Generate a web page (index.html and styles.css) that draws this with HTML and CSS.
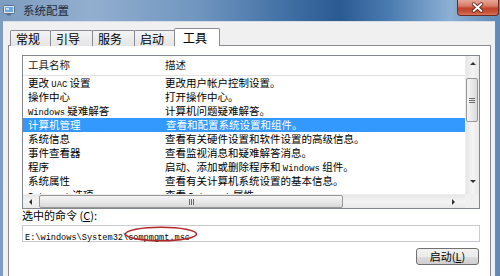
FILE: index.html
```html
<!DOCTYPE html>
<html lang="zh-CN">
<head>
<meta charset="utf-8">
<title>系统配置</title>
<link rel="stylesheet" href="styles.css">
</head>
<body>
<div class="window">
  <div class="titlebar">
    <svg class="appicon" viewBox="0 0 12 12" width="12" height="12">
      <rect x="0.5" y="1.5" width="11" height="8" rx="1" fill="#dfe6ee" stroke="#5c6f86"/>
      <rect x="2" y="3" width="8" height="5" fill="#6aa7e0"/>
      <rect x="3" y="4" width="3" height="2" fill="#bfe0fb"/>
      <rect x="4" y="10" width="4" height="1.5" fill="#5c6f86"/>
    </svg>
    <span class="title">系统配置</span>
    <div class="close">
      <svg viewBox="0 0 42 16" width="42" height="16">
        <path d="M17 4 L25 11 M25 4 L17 11" stroke="#5a1d14" stroke-width="3.6" stroke-linecap="round"/>
        <path d="M17 4 L25 11 M25 4 L17 11" stroke="#ffffff" stroke-width="2" stroke-linecap="round"/>
      </svg>
    </div>
  </div>
  <div class="client">
    <div class="tabs">
      <div class="tab w1">常规</div>
      <div class="tab w2">引导</div>
      <div class="tab w2">服务</div>
      <div class="tab w3">启动</div>
      <div class="tab active">工具</div>
    </div>
    <div class="panel">
      <div class="listview">
        <div class="lv-main">
          <div class="lv-head"><span class="c1">工具名称</span><span class="c2">描述</span></div>
          <div class="lv-row"><span class="c1">更改 <span class="mono">UAC</span> 设置</span><span class="c2">更改用户帐户控制设置。</span></div>
          <div class="lv-row"><span class="c1">操作中心</span><span class="c2">打开操作中心。</span></div>
          <div class="lv-row"><span class="c1"><span class="mono">Windows</span> 疑难解答</span><span class="c2">计算机问题疑难解答。</span></div>
          <div class="lv-row selected"><span class="c1">计算机管理</span><span class="c2">查看和配置系统设置和组件。</span></div>
          <div class="lv-row"><span class="c1">系统信息</span><span class="c2">查看有关硬件设置和软件设置的高级信息。</span></div>
          <div class="lv-row"><span class="c1">事件查看器</span><span class="c2">查看监视消息和疑难解答消息。</span></div>
          <div class="lv-row"><span class="c1">程序</span><span class="c2">启动、添加或删除程序和 <span class="mono">Windows</span> 组件。</span></div>
          <div class="lv-row"><span class="c1">系统属性</span><span class="c2">查看有关计算机系统设置的基本信息。</span></div>
          <div class="lv-row"><span class="c1"><span class="mono">Internet</span> 选项</span><span class="c2">查看 <span class="mono">Internet</span> 属性。</span></div>
        </div>
        <div class="vscroll">
          <div class="sbtn up"><span class="tri-up"></span></div>
          <div class="vtrack">
            <div class="vthumb"><span class="grip-h"></span><span class="grip-h"></span><span class="grip-h"></span></div>
          </div>
          <div class="sbtn down"><span class="tri-down"></span></div>
        </div>
        <div class="hscroll">
          <div class="sbtn left"><span class="tri-left"></span></div>
          <div class="hthumb"><span class="grip-v"></span><span class="grip-v"></span><span class="grip-v"></span></div>
          <div class="htrack"></div>
          <div class="sbtn right"><span class="tri-right"></span></div>
        </div>
        <div class="corner"></div>
      </div>
      <div class="label">选中的命令 (<u>C</u>):</div>
      <div class="cmdbox">
        <span class="mono path">E:\windows\System32\compmgmt.msc</span>
        <svg class="ring" viewBox="0 0 74 16" width="74" height="16">
          <ellipse cx="37" cy="8" rx="35.5" ry="6.8" fill="none" stroke="#b3262a" stroke-width="1.5"/>
        </svg>
      </div>
      <div class="btnrow"><div class="btn">启动(<u>L</u>)</div></div>
    </div>
  </div>
</div>
</body>
</html>
```
FILE: styles.css
```css
* { box-sizing: border-box; }
html, body { margin: 0; padding: 0; }
body {
  width: 500px;
  height: 276px;
  overflow: hidden;
  font-family: "Noto Sans CJK SC", "Noto Sans", sans-serif;
  background: linear-gradient(90deg, #7d9cc0 0%, #93afcf 18%, #6f95bf 40%, #3a6aa0 60%, #2a5a92 68%, #4b7cb1 78%, #8db0d4 90%, #5f89b6 100%);
}
.window {
  height: 276px;
  display: flex;
  flex-direction: column;
}
.titlebar {
  height: 21px;
  flex: none;
  display: flex;
  align-items: flex-start;
  padding-left: 3px;
}
.appicon { margin-top: 4px; flex: none; }
.title {
  margin-left: 8px;
  font-size: 11.5px;
  line-height: 20px;
  color: #1f2b38;
}
.close {
  margin-left: auto;
  margin-right: 1px;
  width: 42px;
  height: 16px;
  border: 1px solid #6d2a20;
  border-top: none;
  border-radius: 0 0 4px 4px;
  background: linear-gradient(#e7a797 0%, #d77b66 40%, #c0432a 55%, #c75238 80%, #d9765e 100%);
  display: flex;
}
.close svg { margin-left: -1px; }
.client {
  flex: 1;
  margin: 0 5px 0 3px;
  background: #f0f0f0;
  padding: 7px 4px 0 5px;
  display: flex;
  flex-direction: column;
  border-top: 1px solid #d6dde6;
}
.tabs {
  display: flex;
  align-items: flex-end;
  height: 17px;
  padding-left: 2px;
  margin-bottom: -1px;
  position: relative;
  z-index: 1;
}
.tab {
  height: 16px;
  border: 1px solid #898c95;
  border-bottom: none;
  border-radius: 2px 2px 0 0;
  background: linear-gradient(#f3f3f3, #e5e5e5);
  font-size: 12px;
  line-height: 15px;
  color: #000;
  padding-left: 5px;
  margin-left: -1px;
  white-space: nowrap;
}
.tab.w1 { width: 41px; margin-left: 0; }
.tab.w2 { width: 43px; }
.tab.w3 { width: 42px; }
.tab.active {
  width: 46px;
  height: 18px;
  margin-left: -2px;
  background: #ffffff;
  padding-left: 8px;
  line-height: 17px;
}
.panel {
  flex: 1;
  background: #ffffff;
  border: 1px solid #898c95;
  border-bottom: none;
  padding: 9px 10px 0 13px;
  display: flex;
  flex-direction: column;
}
.listview {
  height: 154px;
  border: 1px solid #828790;
  display: grid;
  grid-template-columns: 1fr 14px;
  grid-template-rows: 1fr 14px;
  flex: none;
}
.lv-main {
  overflow: hidden;
  font-size: 10.5px;
  color: #000;
}
.lv-head {
  height: 20px;
  border-bottom: 1px solid #e2e2e2;
  display: flex;
  line-height: 18px;
  color: #1a1a1a;
}
.lv-row {
  height: 14px;
  display: flex;
  line-height: 14px;
  white-space: nowrap;
}
.c1 { width: 137px; padding-left: 5px; flex: none; white-space: nowrap; }
.c2 { padding-left: 5px; white-space: nowrap; }
.lv-row.selected { background: #3399ff; color: #ffffff; }
.lv-row.selected .c1 { margin-left: 1px; padding-left: 4px; }
.mono {
  font-family: "Liberation Mono", monospace;
  font-size: 8.8px;
}
.vscroll {
  grid-column: 2;
  grid-row: 1;
  display: flex;
  flex-direction: column;
  background: linear-gradient(90deg, #e6e6e6, #f4f4f4 50%, #e9e9e9);
  border-left: 1px solid #eeeeee;
}
.hscroll {
  grid-column: 1;
  grid-row: 2;
  display: flex;
  align-items: stretch;
  background: linear-gradient(#e6e6e6, #f4f4f4 50%, #e9e9e9);
  border-top: 1px solid #eeeeee;
}
.corner { grid-column: 2; grid-row: 2; background: #f0f0f0; }
.sbtn {
  flex: none;
  display: flex;
  align-items: center;
  justify-content: center;
}
.sbtn.up { height: 14px; }
.sbtn.down { height: 18px; align-items: flex-start; padding-top: 4px; }
.sbtn.left { width: 14px; }
.sbtn.right { width: 16px; justify-content: flex-start; padding-left: 3px; }
.vtrack { flex: 1; padding-top: 8px; }
.vthumb {
  height: 44px;
  margin: 0 1px 0 0;
  border: 1px solid #979797;
  border-radius: 2px;
  background: linear-gradient(90deg, #f5f5f5, #e9e9e9 50%, #d8d8d8);
  display: flex;
  flex-direction: column;
  align-items: center;
  justify-content: center;
  gap: 1px;
}
.grip-h { width: 6px; height: 1px; background: #6a6a6a; }
.hthumb {
  width: 304px;
  margin: 0 0 0 2px;
  border: 1px solid #979797;
  border-radius: 2px;
  background: linear-gradient(#f5f5f5, #e9e9e9 50%, #d8d8d8);
  display: flex;
  align-items: center;
  justify-content: center;
  gap: 1px;
}
.grip-v { width: 1px; height: 6px; background: #6a6a6a; }
.htrack { flex: 1; }
.tri-up { width: 0; height: 0; border-left: 3px solid transparent; border-right: 3px solid transparent; border-bottom: 3px solid #333; }
.tri-down { width: 0; height: 0; border-left: 3px solid transparent; border-right: 3px solid transparent; border-top: 3px solid #333; }
.tri-left { width: 0; height: 0; border-top: 3px solid transparent; border-bottom: 3px solid transparent; border-right: 3px solid #333; }
.tri-right { width: 0; height: 0; border-top: 3px solid transparent; border-bottom: 3px solid transparent; border-left: 3px solid #333; }
.label {
  font-size: 11px;
  line-height: 13px;
  color: #000;
  margin-top: 0;
}
.label u { text-underline-offset: 1px; }
.cmdbox {
  position: relative;
  margin-top: 3px;
  height: 17px;
  border: 1px solid #c9cbd0;
  background: #ffffff;
  padding-left: 2px;
  line-height: 15px;
  color: #000;
}
.path { font-size: 8.6px; }
.ring { position: absolute; left: 101px; top: 0; }
.btnrow {
  display: flex;
  justify-content: flex-end;
  margin-top: 6px;
  padding-right: 1px;
}
.btn {
  width: 63px;
  height: 17px;
  border: 1px solid #707070;
  border-radius: 3px;
  background: linear-gradient(#f2f2f2 0%, #ebebeb 50%, #dddddd 51%, #cfcfcf 100%);
  font-size: 11px;
  line-height: 15px;
  text-align: center;
  color: #000;
}
```
